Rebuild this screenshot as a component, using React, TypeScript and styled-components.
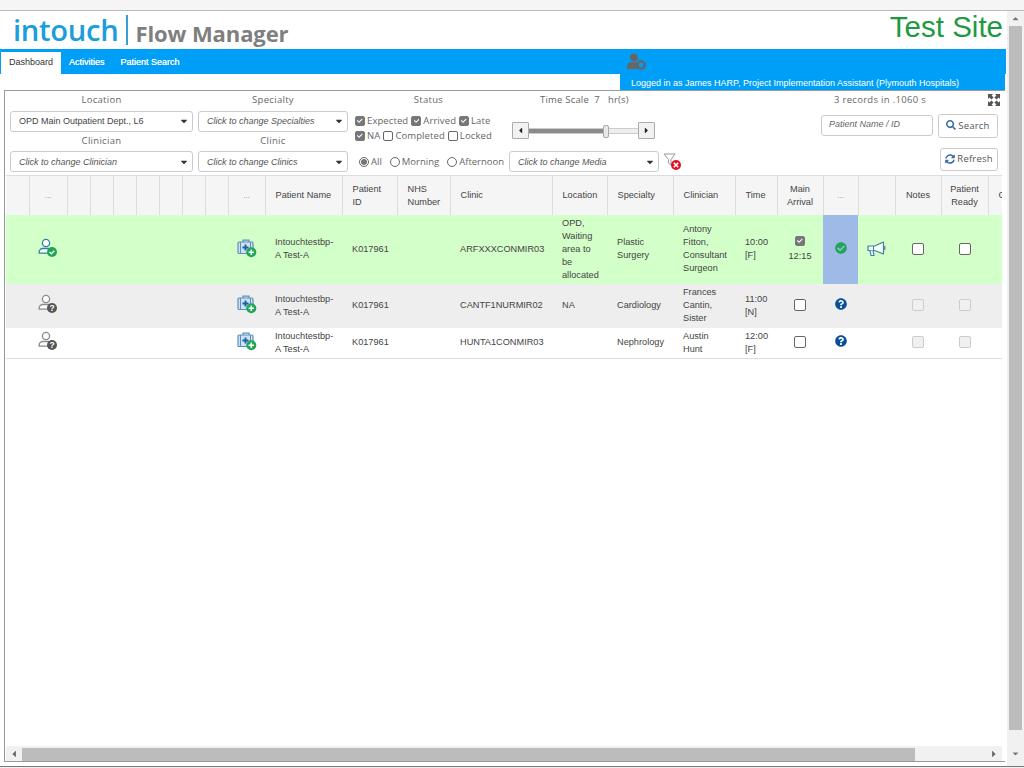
import React from "react";
import styled, { createGlobalStyle } from "styled-components";
import { FaCaretDown, FaCaretLeft, FaCaretRight, FaCaretUp, FaCheck, FaCheckCircle, FaQuestionCircle, FaSearch, FaSyncAlt } from "react-icons/fa";

const Global = createGlobalStyle`
  html, body { margin: 0; padding: 0; background: #fff; overflow: hidden; }
  body { font-family: "Liberation Sans", Arial, sans-serif; font-size: 9px; color: #444; }
`;

const Page = styled.div`
  width: 1024px; height: 768px; display: flex; flex-direction: column; background: #fff; overflow: hidden;
`;
const TopStrip = styled.div`
  height: 10px; flex: none; background: #f5f5f5; border-bottom: 1px solid #bbb;
`;
const Middle = styled.div`
  height: 755px; flex: none; display: flex; min-height: 0;
`;
const BottomEdge = styled.div`
  flex: none; height: 2px; background: #f0f0f0; border-top: 1px solid #777;
`;
const Main = styled.div`
  width: 1006px; flex: none; display: flex; flex-direction: column; min-height: 0;
`;
const VScroll = styled.div`
  flex: 1; background: #f1f1f1; display: flex; flex-direction: column; align-items: center; color: #777; padding-top: 3px;
  box-sizing: border-box; margin-left: 1px;
`;
const VThumb = styled.div`
  width: 13px; height: 704px; background: #bcbcbc; margin: 3px 0 19px;
`;
const Header = styled.header`
  height: 38px; flex: none; display: flex; align-items: flex-start; justify-content: space-between; padding: 0 3px 0 13px;
`;
const Logo = styled.div`
  display: flex; align-items: center; height: 38px;
`;
const LogoMark = styled.span`
  font-family: "Open Sans", sans-serif; font-weight: 600; font-size: 29.2px; color: #1b9edb; letter-spacing: -0.3px; line-height: 38px; width: 113px;
`;
const LogoDivider = styled.span`
  width: 1.5px; height: 30px; background: #3a9cd3; margin-right: 8px;
`;
const LogoName = styled.span`
  font-family: "Open Sans", sans-serif; font-weight: 700; font-size: 22px; color: #7f7f7f; line-height: 44px; height: 38px; letter-spacing: -0.1px;
`;
const SiteName = styled.div`
  font-size: 29.5px; color: #1d9a3f; line-height: 32px;
`;
const Nav = styled.nav`
  height: 25px; flex: none; background: #009ff7; display: flex; align-items: flex-end;
`;
const Tabs = styled.div`
  width: 627px; flex: none; display: flex; align-items: flex-end; padding-left: 1px; box-sizing: border-box;
`;
const Tab = styled.a<{ $active?: boolean }>`
  height: 22px; line-height: 20px; box-sizing: border-box; font-size: 9px; text-align: center;
  padding: 0 8px;
  color: ${p => (p.$active ? "#333" : "#fff")};
  background: ${p => (p.$active ? "#fff" : "transparent")};
  text-shadow: ${p => (p.$active ? "none" : "0 0 .4px #fff")};
`;
const NavIcon = styled.svg`
  width: 19px; height: 17px; margin-bottom: 4px;
`;
const LoggedRow = styled.div`
  height: 16px; flex: none; display: flex; justify-content: flex-end; padding-right: 1px;
`;
const LoggedIn = styled.div`
  width: 385px; box-sizing: border-box; background: #009ff7; color: #fff; font-size: 9px; line-height: 19px; padding-left: 11px; white-space: nowrap;
`;
const Panel = styled.section`
  flex: 1; min-height: 0; margin-left: 4px; margin-right: 1px; border-left: 1px solid #999; border-top: 1px solid #999; border-bottom: 1px solid #999;
  display: flex; flex-direction: column; margin-bottom: 4px; padding-left: 1px; overflow: hidden;
`;
const Filters = styled.div`
  height: 84px; flex: none; display: flex; font-family: "Open Sans", sans-serif; color: #666;
  padding-left: 4px; box-sizing: border-box;
`;
const FieldColumn = styled.div<{ $w: number }>`
  width: ${p => p.$w}px; flex: none; margin-right: 5px; display: flex; flex-direction: column;
`;
const FieldLabel = styled.div`
  text-align: center; height: 19.5px; line-height: 18px; font-size: 9.5px; letter-spacing: .3px;
`;
const SelectBox = styled.div<{ $w?: number; $ph?: boolean }>`
  height: 21px; width: ${p => (p.$w ? `${p.$w}px` : "auto")}; flex: none; box-sizing: border-box; border: 1px solid #ccc; border-radius: 3px; background: #fff;
  font-family: "Liberation Sans", sans-serif; font-size: 9px; color: ${p => (p.$ph ? "#555" : "#444")}; font-style: ${p => (p.$ph ? "italic" : "normal")};
  display: flex; align-items: center; justify-content: space-between; padding: 0 3px 0 8px; white-space: nowrap;
  svg { font-size: 10px; color: #333; }
`;
const MiddleColumn = styled.div`
  width: 330px; flex: none; display: flex; flex-direction: column; margin-left: 2px;
`;
const UpperMiddle = styled.div`
  height: 60px; display: flex;
`;
const StatusBlock = styled.div`
  width: 157px; flex: none;
`;
const StatusLabel = styled.div`
  text-align: center; width: 147px; height: 22px; line-height: 18px; font-size: 9.5px; letter-spacing: .3px;
`;
const CheckRow = styled.div`
  display: flex; align-items: center; height: 15px; font-size: 9.5px; letter-spacing: .1px; white-space: nowrap;
`;
const CheckItem = styled.label`
  display: inline-flex; align-items: center; margin-right: 3px; gap: 2px;
`;
const Box = styled.span<{ $checked?: boolean; $size?: number; $disabled?: boolean }>`
  width: ${p => p.$size ?? 10}px; height: ${p => p.$size ?? 10}px; flex: none; display: inline-flex; align-items: center; justify-content: center; border-radius: 2px; box-sizing: border-box;
  border: 1px solid ${p => (p.$disabled ? "#ccc" : p.$checked ? "#777" : "#666")};
  background: ${p => (p.$checked ? "#777" : p.$disabled ? "#f0f0f0" : "#fff")};
  color: #fff;
  svg { width: 70%; height: 70%; }
`;
const SliderBlock = styled.div`
  width: 143px; flex: none; display: flex; flex-direction: column;
`;
const ScaleLabel = styled.div`
  height: 31px; line-height: 18px; font-size: 9.5px; letter-spacing: .2px; padding-left: 28px; white-space: pre;
`;
const Slider = styled.div`
  display: flex; align-items: center; height: 17px;
`;
const SliderButton = styled.div`
  width: 17px; height: 17px; flex: none; box-sizing: border-box; border: 1px solid #aaa; background: #f1f1f1; border-radius: 1px;
  display: flex; align-items: center; justify-content: center; color: #222; font-size: 9px;
`;
const SliderTrack = styled.div`
  flex: 1; height: 4px; background: #eee; border-top: 1px solid #ccc; border-bottom: 1px solid #ccc; position: relative;
`;
const SliderFill = styled.div`
  height: 100%; background: #8a8a8a;
`;
const SliderHandle = styled.div`
  position: absolute; top: -4px; width: 4px; height: 11px; background: #e8e8e8; border: 1px solid #aaa; border-radius: 2px;
`;
const LowerMiddle = styled.div`
  height: 21px; display: flex; align-items: center;
`;
const RadioGroup = styled.div`
  width: 154px; flex: none; display: flex; align-items: center; font-size: 9.5px; padding-left: 4px; box-sizing: border-box; white-space: nowrap;
`;
const RadioItem = styled.label`
  display: inline-flex; align-items: center; gap: 2px; margin-right: 8px;
`;
const Radio = styled.span<{ $on?: boolean }>`
  width: 10px; height: 10px; box-sizing: border-box; border-radius: 50%; border: 1px solid #666; background: #fff; display: inline-flex; align-items: center; justify-content: center;
  &::after { content: ""; width: 6px; height: 6px; border-radius: 50%; background: ${p => (p.$on ? "#777" : "transparent")}; }
`;
const ClearFilter = styled.svg`
  width: 19px; height: 18px; margin-left: 4px; flex: none;
`;
const RightColumn = styled.div`
  flex: 1; display: flex; flex-direction: column; align-items: flex-end; padding-right: 7px;
`;
const RecordsRow = styled.div`
  height: 23px; align-self: stretch; display: flex; justify-content: space-between; align-items: flex-start; padding-left: 149px; font-size: 9.5px; letter-spacing: .3px; line-height: 18px; white-space: nowrap;
`;
const ExpandIcon = styled.svg`
  width: 12px; height: 12px; margin-top: 3px; margin-right: -2px;
`;
const SearchRow = styled.div`
  display: flex; align-items: flex-start; gap: 5px; height: 24px; margin-bottom: 10px;
`;
const SearchInput = styled.div`
  width: 112px; height: 21px; margin-top: 1px; box-sizing: border-box; border: 1px solid #ccc; border-radius: 3px; font-family: "Liberation Sans", sans-serif; font-style: italic; color: #666; line-height: 17px; padding-left: 7px; font-size: 9px;
`;
const Button = styled.div<{ $w: number; $h: number }>`
  width: ${p => p.$w}px; height: ${p => p.$h}px; box-sizing: border-box; border: 1px solid #ccc; border-radius: 3px; background: #fff; display: flex; align-items: center; justify-content: center; gap: 2px; font-size: 9.5px; letter-spacing: .2px; color: #555; padding-bottom: 2px;
  svg { color: #3a6ea5; font-size: 10px; }
`;
const TableArea = styled.div`
  flex: 1; min-height: 0; overflow: hidden; width: 996px;
`;
const Table = styled.table`
  width: 1043px; table-layout: fixed; border-collapse: collapse; font-family: "Liberation Sans", sans-serif; font-size: 9.2px; line-height: 13px; color: #444;
`;
const Th = styled.th<{ $center?: boolean }>`
  height: 39px; padding: 1px 0 0 10px; background: #f5f5f5; border: 1px solid #ddd; border-bottom: 0; border-left: 0; font-weight: 400; color: #444; white-space: nowrap; overflow: hidden;
  text-align: ${p => (p.$center ? "center" : "left")}; box-sizing: border-box;
  ${p => p.$center && "padding: 1px 0 0;"}
`;
const HeaderDots = styled.span`
  color: #888; font-size: 8px;
`;
const Row = styled.tr<{ $tone: "green" | "grey" | "white"; $h: number }>`
  height: ${p => p.$h}px;
  background: ${p => (p.$tone === "green" ? "#d3ffc9" : p.$tone === "grey" ? "#eee" : "#fff")};
  ${p => p.$tone === "white" && "border-bottom: 1px solid #ddd;"}
`;
const Td = styled.td<{ $center?: boolean; $status?: boolean; $lift?: number }>`
  padding: 0 0 0 10px; vertical-align: middle;
  ${p => p.$center && `padding: 0 0 ${p.$lift ?? 0}px; text-align: center;`}
  ${p => p.$status && "background: #9fbae6;"}
`;
const IconCell = styled.div`
  display: flex; justify-content: center; align-items: center;
  svg { display: block; }
`;
const ArrivalCell = styled.div`
  display: flex; flex-direction: column; align-items: center; gap: 4px;
`;
const StatusOk = styled(FaCheckCircle)` color: #1fa655; font-size: 12px; display: block; margin: 0 auto; `;
const StatusQ = styled(FaQuestionCircle)` color: #0a4f9c; font-size: 12px; display: block; margin: 0 auto; `;
const HScroll = styled.div`
  flex: none; width: 996px; height: 15px; background: #f1f1f1; display: flex; align-items: center; color: #666; font-size: 10px; box-sizing: border-box;
`;
const HArrow = styled.div`
  width: 16px; flex: none; display: flex; justify-content: center;
`;
const HThumb = styled.div`
  width: 893px; height: 13px; margin-top: 2px; background: #bcbcbc; flex: none;
`;
const HSpacer = styled.div` flex: 1; `;

const PersonIcon = ({ ok }: { ok: boolean }) => {
  const stroke = ok ? "#2f7fa8" : "#8a8a8a";
  return (
    <svg width="20" height="20" viewBox="0 0 20 20">
      <circle cx="8" cy="5" r="3.6" fill="#fff" stroke={stroke} strokeWidth="1.3" />
      <path d="M1.2 15.2v-1.4c0-2 1.8-3.3 3.6-3.3h5.2c1 0 1.8.3 2.4.8v3.9z" fill="#fff" stroke={stroke} strokeWidth="1.3" />
      <circle cx="14" cy="14" r="5" fill={ok ? "#1fa655" : "#555"} />
      {ok ? (
        <path d="M11.6 14l1.7 1.7 3-3" fill="none" stroke="#fff" strokeWidth="1.5" />
      ) : (
        <text x="14" y="17" textAnchor="middle" fontSize="8.5" fontWeight="700" fill="#fff" fontFamily="Liberation Sans, sans-serif">?</text>
      )}
    </svg>
  );
};

const CaseIcon = () => (
  <svg width="20" height="20" viewBox="0 0 20 20">
    <path d="M6 4V2.2h6V4" fill="none" stroke="#5c8fc0" strokeWidth="1.2" />
    <rect x="1" y="4" width="15" height="11.5" rx="1" fill="#cfe0f0" stroke="#5c8fc0" strokeWidth="1.2" />
    <path d="M3.5 4v11.5M13.5 4v11.5" stroke="#5c8fc0" strokeWidth="1" />
    <path d="M8.5 6.5v6M5.5 9.5h6" stroke="#1560aa" strokeWidth="1.8" />
    <circle cx="14.3" cy="14.3" r="5" fill="#1fa655" />
    <path d="M14.3 11.6v5.4M11.6 14.3h5.4" stroke="#fff" strokeWidth="1.6" />
  </svg>
);

const MegaphoneIcon = () => (
  <svg width="20" height="17" viewBox="0 0 20 17">
    <path d="M1 5h6.5l9-4v12l-9-3.5H1z" fill="#fff" fillOpacity=".75" stroke="#3f7fa8" strokeWidth="1.2" strokeLinejoin="round" />
    <path d="M6.5 5v4.5" stroke="#3f7fa8" strokeWidth="1" />
    <path d="M3 9.5l1 5h3l-1-5" fill="#fff" fillOpacity=".75" stroke="#3f7fa8" strokeWidth="1.2" />
    <path d="M17.8 5v4" stroke="#3f7fa8" strokeWidth="1.2" />
  </svg>
);

const Check = ({ checked, size, disabled }: { checked?: boolean; size?: number; disabled?: boolean }) => (
  <Box $checked={checked} $size={size} $disabled={disabled}>{checked ? <FaCheck /> : null}</Box>
);

type Col = { w: number; label?: React.ReactNode; center?: boolean };
const dots = <HeaderDots>...</HeaderDots>;
const cols: Col[] = [
  { w: 23 }, { w: 38, label: dots, center: true },
  { w: 23 }, { w: 23 }, { w: 23 }, { w: 23 }, { w: 23 }, { w: 23 }, { w: 23 },
  { w: 37, label: dots, center: true },
  { w: 77, label: "Patient Name" },
  { w: 55, label: <>Patient<br />ID</> },
  { w: 53, label: <>NHS<br />Number</> },
  { w: 102, label: "Clinic" },
  { w: 55, label: "Location" },
  { w: 66, label: "Specialty" },
  { w: 62, label: "Clinician" },
  { w: 42, label: "Time" },
  { w: 46, label: <>Main<br />Arrival</>, center: true },
  { w: 35, label: dots, center: true },
  { w: 37 },
  { w: 46, label: "Notes", center: true },
  { w: 47, label: <>Patient<br />Ready</>, center: true },
  { w: 61, label: "Comments" },
];

const Blanks = () => (
  <>
    {[0, 1, 2, 3, 4, 5, 6].map(i => <Td key={i} />)}
  </>
);

type Patient = {
  tone: "green" | "grey" | "white"; h: number; ok: boolean; clinic: string;
  location: React.ReactNode; specialty: React.ReactNode; clinician: React.ReactNode; time: React.ReactNode;
};
const rows: Patient[] = [
  { tone: "green", h: 69, ok: true, clinic: "ARFXXXCONMIR03", location: <>OPD,<br />Waiting<br />area to<br />be<br />allocated</>, specialty: <>Plastic<br />Surgery</>, clinician: <>Antony<br />Fitton,<br />Consultant<br />Surgeon</>, time: <>10:00<br />[F]</> },
  { tone: "grey", h: 44, ok: false, clinic: "CANTF1NURMIR02", location: "NA", specialty: "Cardiology", clinician: <>Frances<br />Cantin,<br />Sister</>, time: <>11:00<br />[N]</> },
  { tone: "white", h: 31, ok: false, clinic: "HUNTA1CONMIR03", location: "", specialty: "Nephrology", clinician: <>Austin<br />Hunt</>, time: <>12:00<br />[F]</> },
];

export default function App() {
  return (
    <Page>
      <Global />
      <TopStrip />
      <Middle>
        <Main>
          <Header>
            <Logo>
              <LogoMark>intouch</LogoMark>
              <LogoDivider />
              <LogoName>Flow Manager</LogoName>
            </Logo>
            <SiteName>Test Site</SiteName>
          </Header>
          <Nav>
            <Tabs>
              <Tab $active>Dashboard</Tab>
              <Tab>Activities</Tab>
              <Tab>Patient Search</Tab>
            </Tabs>
            <NavIcon viewBox="0 0 19 17">
              <circle cx="7" cy="4.5" r="4" fill="#666" />
              <path d="M0 16v-3c0-2.4 2-3.8 4-3.8h6c.8 0 1.5.2 2 .5v6.3z" fill="#666" />
              <circle cx="14" cy="12" r="3.4" fill="none" stroke="#666" strokeWidth="2" />
              <circle cx="14" cy="12" r="4.6" fill="none" stroke="#666" strokeWidth="1.2" strokeDasharray="1.6 1.6" />
            </NavIcon>
          </Nav>
          <LoggedRow>
            <LoggedIn>Logged in as James HARP, Project Implementation Assistant (Plymouth Hospitals)</LoggedIn>
          </LoggedRow>
          <Panel>
            <Filters>
              <FieldColumn $w={183}>
                <FieldLabel>Location</FieldLabel>
                <SelectBox>OPD Main Outpatient Dept., L6<FaCaretDown /></SelectBox>
                <FieldLabel>Clinician</FieldLabel>
                <SelectBox $ph>Click to change Clinician<FaCaretDown /></SelectBox>
              </FieldColumn>
              <FieldColumn $w={150}>
                <FieldLabel>Specialty</FieldLabel>
                <SelectBox $ph>Click to change Specialties<FaCaretDown /></SelectBox>
                <FieldLabel>Clinic</FieldLabel>
                <SelectBox $ph>Click to change Clinics<FaCaretDown /></SelectBox>
              </FieldColumn>
              <MiddleColumn>
                <UpperMiddle>
                  <StatusBlock>
                    <StatusLabel>Status</StatusLabel>
                    <CheckRow>
                      <CheckItem><Check checked />Expected</CheckItem>
                      <CheckItem><Check checked />Arrived</CheckItem>
                      <CheckItem><Check checked />Late</CheckItem>
                    </CheckRow>
                    <CheckRow>
                      <CheckItem><Check checked />NA</CheckItem>
                      <CheckItem><Check />Completed</CheckItem>
                      <CheckItem><Check />Locked</CheckItem>
                    </CheckRow>
                  </StatusBlock>
                  <SliderBlock>
                    <ScaleLabel>{"Time Scale  7   hr(s)"}</ScaleLabel>
                    <Slider>
                      <SliderButton><FaCaretLeft /></SliderButton>
                      <SliderTrack>
                        <SliderFill style={{ width: "68%" }} />
                        <SliderHandle style={{ left: "68%" }} />
                      </SliderTrack>
                      <SliderButton><FaCaretRight /></SliderButton>
                    </Slider>
                  </SliderBlock>
                </UpperMiddle>
                <LowerMiddle>
                  <RadioGroup>
                    <RadioItem><Radio $on />All</RadioItem>
                    <RadioItem><Radio />Morning</RadioItem>
                    <RadioItem><Radio />Afternoon</RadioItem>
                  </RadioGroup>
                  <SelectBox $ph $w={150}>Click to change Media<FaCaretDown /></SelectBox>
                  <ClearFilter viewBox="0 0 19 18">
                    <path d="M1 1h11L8 6.5V12L5.5 10V6.5z" fill="#fff" stroke="#999" strokeWidth="1" />
                    <circle cx="13" cy="12" r="5" fill="#e01020" />
                    <path d="M10.8 9.8l4.4 4.4M15.2 9.8l-4.4 4.4" stroke="#fff" strokeWidth="1.6" />
                  </ClearFilter>
                </LowerMiddle>
              </MiddleColumn>
              <RightColumn>
                <RecordsRow>
                  3 records in .1060 s
                  <ExpandIcon viewBox="0 0 12 12">
                    <path d="M0 0h5L3.6 1.4 5.6 3.4 3.4 5.6 1.4 3.6 0 5zM12 0v5l-1.4-1.4-2 2-2.2-2.2 2-2L7 0zM0 12V7l1.4 1.4 2-2 2.2 2.2-2 2L5 12zM12 12H7l1.4-1.4-2-2 2.2-2.2 2 2L12 7z" fill="#555" />
                  </ExpandIcon>
                </RecordsRow>
                <SearchRow>
                  <SearchInput>Patient Name / ID</SearchInput>
                  <Button $w={60} $h={24}><FaSearch />Search</Button>
                </SearchRow>
                <Button $w={58} $h={23}><FaSyncAlt />Refresh</Button>
              </RightColumn>
            </Filters>
            <TableArea>
              <Table>
                <colgroup>
                  {cols.map((c, i) => <col key={i} style={{ width: c.w }} />)}
                </colgroup>
                <thead>
                  <tr>
                    {cols.map((c, i) => <Th key={i} $center={c.center}>{c.label}</Th>)}
                  </tr>
                </thead>
                <tbody>
                  {rows.map((r, i) => (
                    <Row key={i} $tone={r.tone} $h={r.h}>
                      <Td />
                      <Td $center $lift={r.ok ? 2 : 4}><IconCell><PersonIcon ok={r.ok} /></IconCell></Td>
                      <Blanks />
                      <Td $center $lift={r.ok ? 2 : 4}><IconCell><CaseIcon /></IconCell></Td>
                      <Td>Intouchtestbp-<br />A Test-A</Td>
                      <Td>K017961</Td>
                      <Td />
                      <Td>{r.clinic}</Td>
                      <Td>{r.location}</Td>
                      <Td>{r.specialty}</Td>
                      <Td>{r.clinician}</Td>
                      <Td>{r.time}</Td>
                      <Td $center $lift={r.ok ? 0 : 2}>
                        {r.ok ? (
                          <ArrivalCell><Check checked size={10} />12:15</ArrivalCell>
                        ) : (
                          <ArrivalCell><Check size={12} /></ArrivalCell>
                        )}
                      </Td>
                      <Td $center $status={r.ok} $lift={r.ok ? 2 : 4}>{r.ok ? <StatusOk /> : <StatusQ />}</Td>
                      <Td $center>{r.ok ? <IconCell><MegaphoneIcon /></IconCell> : null}</Td>
                      <Td $center $lift={r.ok ? 0 : 2}><ArrivalCell><Check size={12} disabled={!r.ok} /></ArrivalCell></Td>
                      <Td $center $lift={r.ok ? 0 : 2}><ArrivalCell><Check size={12} disabled={!r.ok} /></ArrivalCell></Td>
                      <Td />
                    </Row>
                  ))}
                </tbody>
              </Table>
            </TableArea>
            <HScroll>
              <HArrow><FaCaretLeft /></HArrow>
              <HThumb />
              <HSpacer />
              <HArrow><FaCaretRight /></HArrow>
            </HScroll>
          </Panel>
        </Main>
        <VScroll>
          <FaCaretUp />
          <VThumb />
          <FaCaretDown />
        </VScroll>
      </Middle>
      <BottomEdge />
    </Page>
  );
}
